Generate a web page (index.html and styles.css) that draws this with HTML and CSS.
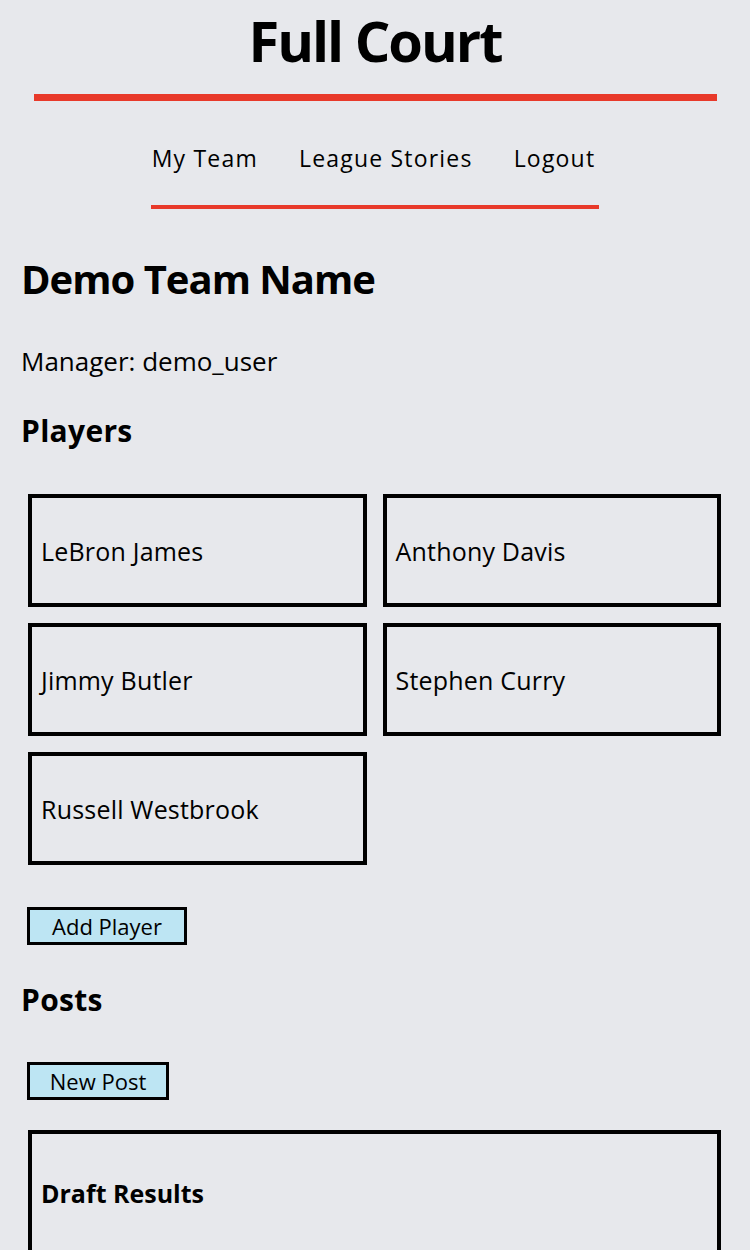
FILE: index.html
```html
<!DOCTYPE html>
<html lang="en">
<head>
<meta charset="utf-8">
<title>Full Court</title>
<link rel="stylesheet" href="styles.css">
</head>
<body>
<header class="site-header">
  <h1 class="site-title">Full Court</h1>
  <div class="title-rule"></div>
  <nav class="main-nav">
    <a href="#" class="nav-link">My Team</a>
    <a href="#" class="nav-link">League Stories</a>
    <a href="#" class="nav-link">Logout</a>
  </nav>
</header>
<main class="team-page">
  <h2 class="team-name">Demo Team Name</h2>
  <p class="manager">Manager: demo_user</p>
  <h3 class="section-title">Players</h3>
  <div class="player-grid">
    <div class="player-card">LeBron James</div>
    <div class="player-card">Anthony Davis</div>
    <div class="player-card">Jimmy Butler</div>
    <div class="player-card">Stephen Curry</div>
    <div class="player-card">Russell Westbrook</div>
  </div>
  <button class="action-btn add-player">Add Player</button>
  <h3 class="section-title posts-title">Posts</h3>
  <button class="action-btn new-post">New Post</button>
  <div class="post-card">
    <h4 class="post-title">Draft Results</h4>
  </div>
</main>
</body>
</html>
```
FILE: styles.css
```css
html, body {
  margin: 0;
  padding: 0;
}
body {
  background: #e7e8ec;
  color: #000;
  font-family: "Open Sans", Lato, sans-serif;
}
.site-header {
  padding-top: 8px;
  text-align: center;
}
.site-title {
  margin: 0;
  font-size: 56px;
  line-height: 64px;
  font-weight: 700;
  letter-spacing: -2px;
}
.title-rule {
  margin: 22px 33px 0 34px;
  height: 7px;
  background: #e8392a;
}
.main-nav {
  display: inline-flex;
  gap: 41px;
  margin-top: 42px;
  padding: 0 4px 32px 1px;
  border-bottom: 4px solid #e8392a;
}
.nav-link {
  color: #000;
  text-decoration: none;
  font-size: 23px;
  line-height: 30px;
  letter-spacing: 1.2px;
}
.team-page {
  padding: 0 21px;
}
.team-name {
  margin: 46px 0 0;
  font-size: 40px;
  line-height: 48px;
  font-weight: 700;
  letter-spacing: -1px;
}
.manager {
  margin: 42px 0 0;
  font-size: 26px;
  line-height: 32px;
}
.section-title {
  margin: 36px 0 0;
  font-size: 30px;
  line-height: 36px;
  font-weight: 700;
  letter-spacing: 0.3px;
}
.player-grid {
  display: grid;
  grid-template-columns: 1fr 1fr;
  gap: 16px;
  margin: 45px 8px 0 7px;
}
.player-card {
  height: 113px;
  box-sizing: border-box;
  border: 4px solid #000;
  display: flex;
  align-items: center;
  padding-left: 9px;
  font-size: 25px;
  letter-spacing: 0.2px;
}
.action-btn {
  display: block;
  box-sizing: border-box;
  height: 38px;
  padding: 0;
  border: 3px solid #000;
  background: #bde5f3;
  font-family: inherit;
  font-size: 22px;
  line-height: 30px;
  color: #000;
  border-radius: 0;
  white-space: nowrap;
  text-align: center;
}
.add-player {
  margin: 42px 0 0 6px;
  width: 160px;
}
.posts-title {
  margin-top: 37px;
}
.new-post {
  margin: 44px 0 0 6px;
  width: 142px;
}
.post-card {
  margin: 30px 8px 0 7px;
  border: 4px solid #000;
  padding: 45px 9px 60px;
}
.post-title {
  margin: 0;
  font-size: 25px;
  line-height: 28px;
  font-weight: 700;
}
```
